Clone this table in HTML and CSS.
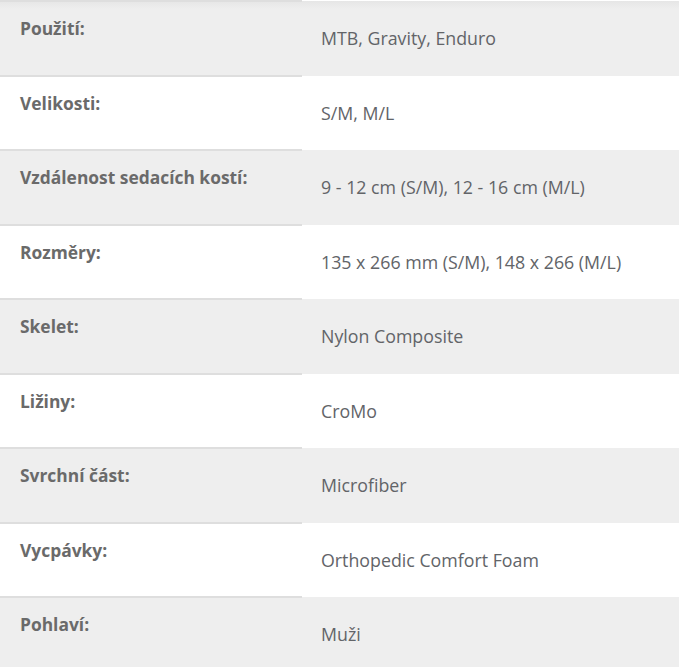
FILE: index.html
```html
<!DOCTYPE html>
<html lang="cs">
<head>
<meta charset="utf-8">
<title>Parametry</title>
<link rel="stylesheet" href="styles.css">
</head>
<body>
<table class="specs">
  <tbody>
    <tr class="row odd first"><th class="label">Použití:</th><td class="value">MTB, Gravity, Enduro</td></tr>
    <tr class="row even"><th class="label">Velikosti:</th><td class="value">S/M, M/L</td></tr>
    <tr class="row odd"><th class="label">Vzdálenost sedacích kostí:</th><td class="value">9 - 12 cm (S/M), 12 - 16 cm (M/L)</td></tr>
    <tr class="row even"><th class="label">Rozměry:</th><td class="value">135 x 266 mm (S/M), 148 x 266 (M/L)</td></tr>
    <tr class="row odd"><th class="label">Skelet:</th><td class="value">Nylon Composite</td></tr>
    <tr class="row even"><th class="label">Ližiny:</th><td class="value">CroMo</td></tr>
    <tr class="row odd"><th class="label">Svrchní část:</th><td class="value">Microfiber</td></tr>
    <tr class="row even"><th class="label">Vycpávky:</th><td class="value">Orthopedic Comfort Foam</td></tr>
    <tr class="row odd"><th class="label">Pohlaví:</th><td class="value">Muži</td></tr>
  </tbody>
</table>
</body>
</html>
```

FILE: styles.css
```css
html, body {
  margin: 0;
  padding: 0;
  background: #ffffff;
}
body {
  font-family: "Open Sans", "Liberation Sans", sans-serif;
}
.specs {
  width: 679px;
  border-collapse: collapse;
  border-spacing: 0;
}
.row {
  height: 74.5px;
}
.odd {
  background: #eeeeee;
}
.even {
  background: #ffffff;
}
.first {
  background: linear-gradient(#e6e6e6 0, #eeeeee 8px);
}
.label {
  padding: 14px 20px 0 20px;
  border-top: 2px solid #dedede;
  text-align: left;
  vertical-align: top;
  font-size: 17.4px;
  line-height: 24px;
  font-weight: 700;
  color: #6a6a6a;
  box-sizing: border-box;
}
.specs th.label { width: 302px; }
.value {
  padding: 0 0 0 19px;
  vertical-align: middle;
  font-size: 17.8px;
  line-height: 24px;
  color: #626468;
}
```
